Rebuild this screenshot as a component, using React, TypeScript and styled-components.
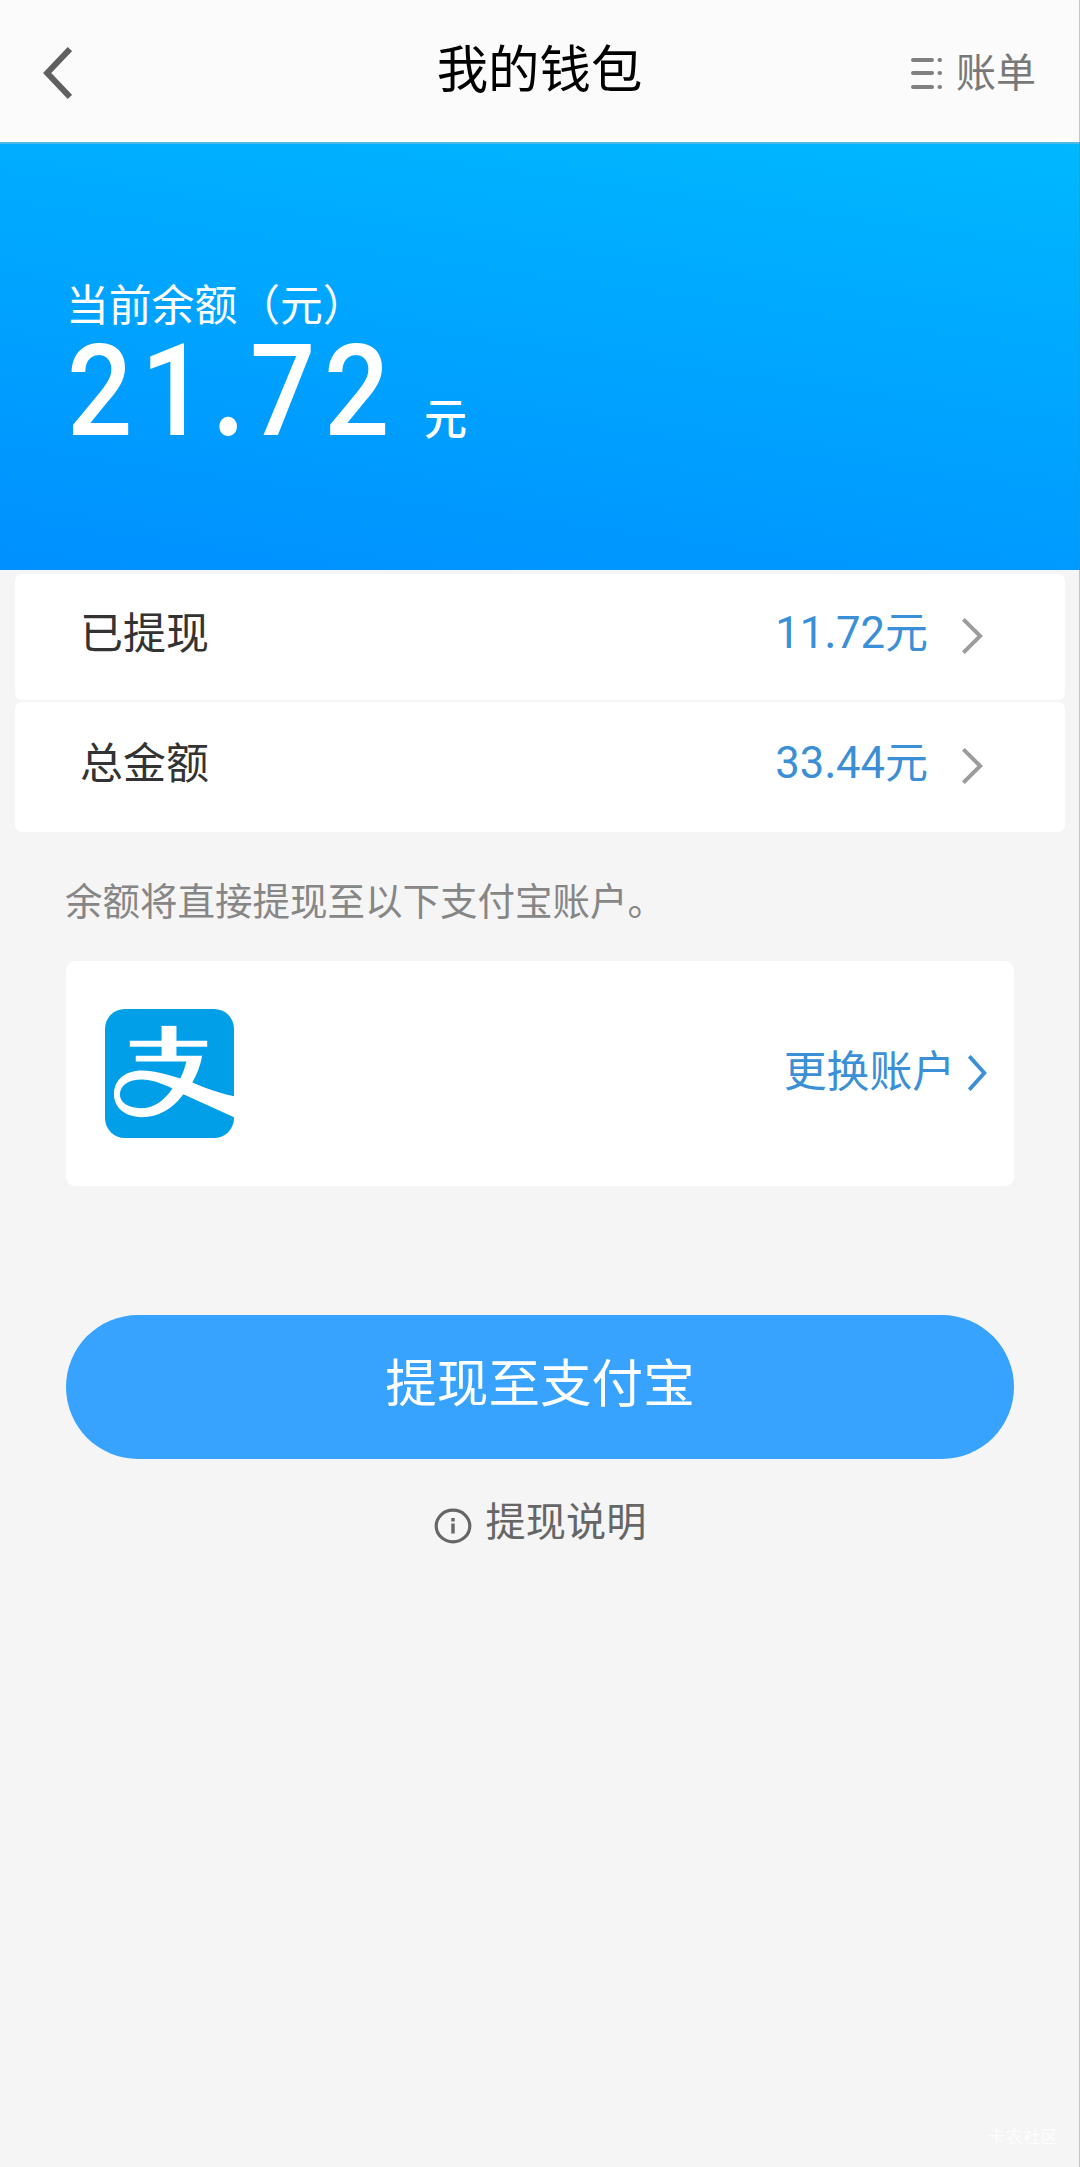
import React from 'react';
import styled, { createGlobalStyle } from 'styled-components';

const cjk = "'Noto Sans CJK SC', sans-serif";

const GlobalStyle = createGlobalStyle`
  * { box-sizing: border-box; }
  body {
    margin: 0;
    background: #f5f5f5;
    font-family: ${cjk};
  }
  button { border: 0; padding: 0; background: none; font: inherit; color: inherit; }
`;

const Page = styled.div`
  position: relative;
  display: flex;
  flex-direction: column;
  width: 1080px;
  height: 2167px;
  overflow: hidden;
  background: #f5f5f5;
`;

const Edge = styled.div`
  position: absolute;
  top: 0;
  right: 0;
  width: 1px;
  height: 100%;
  background: rgba(120, 120, 120, 0.4);
`;

const Header = styled.header`
  display: grid;
  grid-template-columns: 1fr auto 1fr;
  align-items: center;
  height: 142px;
  padding: 0 44px 0 43px;
  background: #fbfbfb;
  border-bottom: 4px solid #fff;
`;

const Back = styled.button`
  display: flex;
  padding-top: 8px;
`;

const Title = styled.h1`
  margin: 0;
  padding-bottom: 6px;
  font-size: 51.4px;
  line-height: 60px;
  font-weight: 400;
  color: #000;
`;

const Bills = styled.button`
  display: flex;
  justify-self: end;
  align-items: flex-end;
  gap: 14px;
  padding-top: 2px;
  font-size: 40px;
  line-height: 48px;
  color: #787878;

  svg { margin-bottom: 4px; }
`;

const Hero = styled.section`
  height: 428px;
  padding: 133px 66px 0;
  border-top: 2px solid #4fb8e4;
  background: linear-gradient(188deg, #00b8ff 0%, #009fff 62%, #0090ff 100%);
  color: #fff;
`;

const HeroLabel = styled.div`
  font-size: 42.8px;
  line-height: 50px;
`;

const Balance = styled.div`
  display: flex;
  align-items: baseline;
  font-size: 43px;
  font-weight: 500;
  line-height: 117px;
  white-space: nowrap;
`;

const BigAmount = styled.span`
  width: 358px;
  padding-left: 1px;
  font-family: Roboto, ${cjk};
  font-size: 128px;
  font-weight: 500;
  line-height: 117px;
  letter-spacing: 9.2px;
  transform: scaleX(0.9);
  transform-origin: left;
`;

const RoundPoint = styled.span<{ $bold?: boolean }>`
  display: inline-block;
  width: ${(p) => (p.$bold ? 0.31 : 0.268)}em;
  font-family: Lato, sans-serif;
  font-weight: ${(p) => (p.$bold ? 700 : 400)};
  text-align: ${(p) => (p.$bold ? 'left' : 'center')};
`;

const Rows = styled.div`
  display: flex;
  flex-direction: column;
  gap: 2px;
  padding: 4px 15px 0;
`;

const Row = styled.div<{ $height: number; $lift: number }>`
  display: flex;
  align-items: center;
  height: ${(p) => p.$height}px;
  padding: 0 82px ${(p) => p.$lift}px 65px;
  border-radius: 7px;
  background: #fff;
  font-size: 43px;
  line-height: 60px;
  color: #333;
`;

const RowLabel = styled.span`
  padding-bottom: 5px;
`;

const RowValue = styled.span`
  margin-left: auto;
  margin-right: 34px;
  font-family: Roboto, ${cjk};
  font-size: 43px;
  color: #3b8fd6;
`;

const Digits = styled.span`
  font-size: 43.6px;
`;

const RowArrow = styled.span`
  display: flex;
  padding-top: 8px;
`;

const Hint = styled.p`
  margin: 43px 65px 3px;
  font-size: 37.5px;
  line-height: 48px;
  color: #868686;
`;

const AccountCard = styled.section`
  display: flex;
  align-items: center;
  justify-content: space-between;
  height: 225px;
  margin: 35px 66px 0;
  padding: 0 27px 1px 39px;
  border-radius: 9px;
  background: #fff;
`;

const ChangeAccount = styled.button`
  display: flex;
  align-items: flex-end;
  gap: 13px;
  padding-bottom: 10px;
  font-size: 42.8px;
  line-height: 60px;
  color: #3b8fd6;

  svg { margin-bottom: 7px; }
`;

const Withdraw = styled.button`
  height: 144px;
  margin: 129px 66px 0;
  padding-bottom: 15px;
  border-radius: 72px;
  background: #38a3ff;
  font-size: 51.6px;
  line-height: 60px;
  color: #fff;
`;

const Explain = styled.button`
  display: flex;
  align-items: center;
  align-self: center;
  gap: 14px;
  margin-top: 32px;
  font-size: 40.2px;
  line-height: 56px;
  color: #666;
`;

const InfoMark = styled.span`
  display: flex;
  padding-top: 13px;
`;

const Watermark = styled.div`
  margin: auto 22px 18px auto;
  font-size: 17.5px;
  line-height: 26px;
  color: #fdfdfd;
`;

function Chevron({ w, h, color, stroke, left = false }: {
  w: number; h: number; color: string; stroke: number; left?: boolean;
}) {
  const i = stroke * 0.7;
  const points = left
    ? `${w - i / 2},${i / 2} ${i},${h / 2} ${w - i / 2},${h - i / 2}`
    : `${i / 2},${i / 2} ${w - i},${h / 2} ${i / 2},${h - i / 2}`;
  return (
    <svg width={w} height={h} viewBox={`0 0 ${w} ${h}`}>
      <polyline points={points} fill="none" stroke={color} strokeWidth={stroke} />
    </svg>
  );
}

function Amount({ value, bold }: { value: string; bold?: boolean }) {
  const [whole, cents] = value.split('.');
  return <>{whole}<RoundPoint $bold={bold}>.</RoundPoint>{cents}</>;
}

function AlipayLogo() {
  return (
    <svg width="129" height="129" viewBox="0 0 130 130">
      <rect width="130" height="130" rx="20" fill="#029fe9" />
      <g fill="#fff">
        <rect x="57" y="17" width="15" height="34" />
        <rect x="25" y="32" width="78" height="6" />
        <path d="M31 47H98Q95 62 88 74Q108 83 130 88V109L79 86Q62 109 37 109C20 109 9 99 9 86C9 71 21 62 37 62C50 62 62 66 76 70Q80 62 82 53H31Z" />
      </g>
      <path d="M68 80C57 75 47 71 37 71C24 71 15 77 15 86C15 94 23 100 36 100C49 100 60 92 68 80Z" fill="#029fe9" />
    </svg>
  );
}

const rows = [
  { label: '已提现', value: '11.72', height: 126, lift: 10 },
  { label: '总金额', value: '33.44', height: 130, lift: 10 },
];

export default function App() {
  return (
    <Page>
      <GlobalStyle />
      <Header>
        <Back><Chevron w={29} h={52} color="#606060" stroke={6} left /></Back>
        <Title>我的钱包</Title>
        <Bills>
          <svg width="32" height="34" viewBox="0 0 32 34" fill="none" stroke="#808080" strokeWidth="4" strokeLinecap="round">
            <path d="M3 4H22M3 17H22M3 31H22M29.5 4h.5M29.5 17h.5M29.5 31h.5" />
          </svg>
          账单
        </Bills>
      </Header>
      <Hero>
        <HeroLabel>当前余额（元）</HeroLabel>
        <Balance><BigAmount><Amount value="21.72" bold /></BigAmount>元</Balance>
      </Hero>
      <Rows>
        {rows.map((r) => (
          <Row key={r.label} $height={r.height} $lift={r.lift}>
            <RowLabel>{r.label}</RowLabel>
            <RowValue><Digits><Amount value={r.value} /></Digits>元</RowValue>
            <RowArrow><Chevron w={21} h={36} color="#9c9c9c" stroke={4} /></RowArrow>
          </Row>
        ))}
      </Rows>
      <Hint>余额将直接提现至以下支付宝账户。</Hint>
      <AccountCard>
        <AlipayLogo />
        <ChangeAccount>更换账户<Chevron w={19} h={36} color="#3b8fd6" stroke={3.8} /></ChangeAccount>
      </AccountCard>
      <Withdraw>提现至支付宝</Withdraw>
      <Explain>
        <InfoMark>
          <svg width="38" height="36" viewBox="0 0 38 36" fill="none" stroke="#666">
            <ellipse cx="19" cy="18" rx="16.8" ry="15.8" strokeWidth="3.2" />
            <path d="M19 15.5V25.5M19 10v3.4" strokeWidth="3.4" />
          </svg>
        </InfoMark>
        提现说明
      </Explain>
      <Watermark>卡农社区</Watermark>
      <Edge />
    </Page>
  );
}
